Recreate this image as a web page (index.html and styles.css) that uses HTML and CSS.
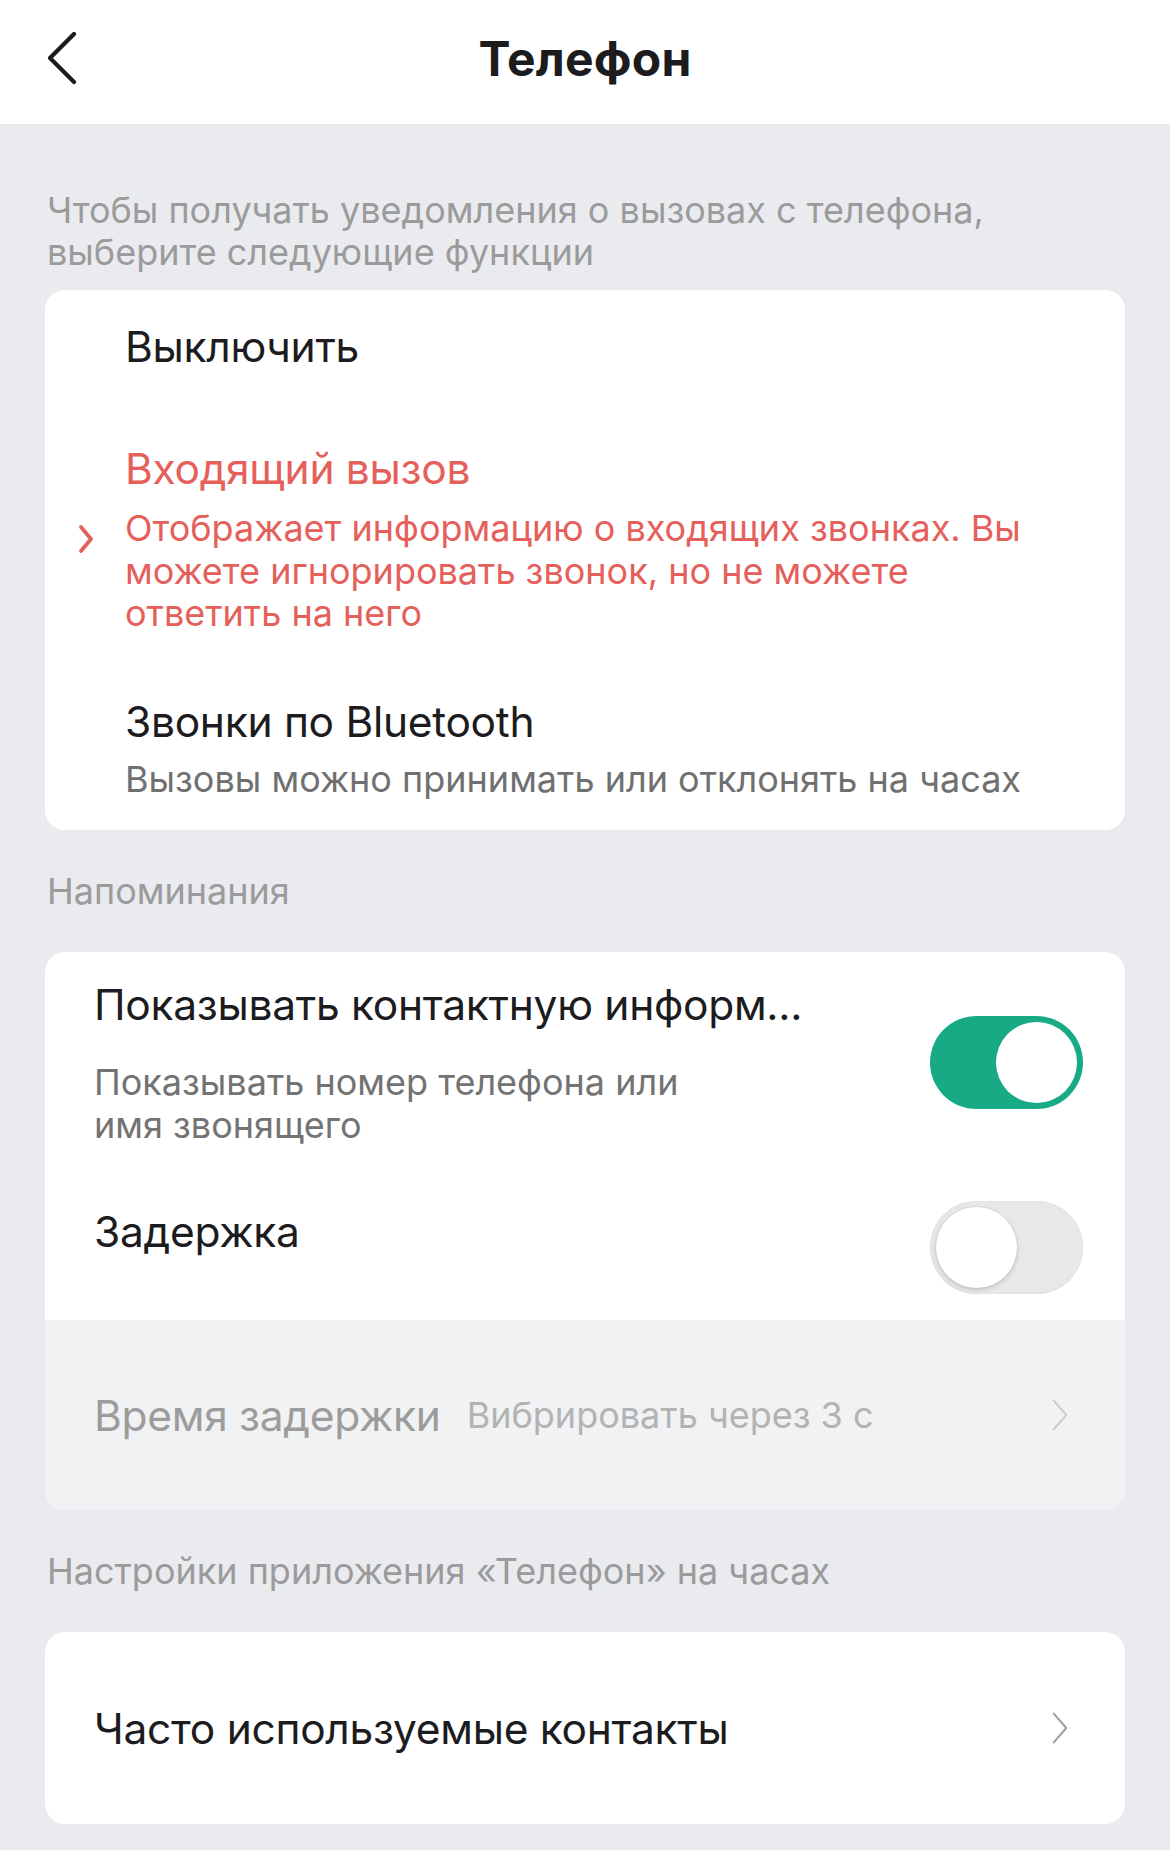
FILE: index.html
```html
<!DOCTYPE html>
<html lang="ru">
<head>
<meta charset="utf-8">
<title>Телефон</title>
<link rel="stylesheet" href="styles.css">
</head>
<body>
<header class="topbar">
  <button class="back" type="button" aria-label="Назад">
    <svg width="30" height="54" viewBox="0 0 30 54" fill="none">
      <polyline points="26,2 2,26 26,50" stroke="#1c1c1e" stroke-width="4.2" stroke-linecap="round" stroke-linejoin="round"/>
    </svg>
  </button>
  <h1 class="title">Телефон</h1>
  <span class="spacer"></span>
</header>

<main class="content">
  <p class="note">Чтобы получать уведомления о вызовах с телефона, выберите следующие функции</p>

  <section class="card options">
    <div class="option option-off">
      <span class="mark"></span>
      <div class="option-body">
        <div class="option-title">Выключить</div>
      </div>
    </div>
    <div class="option selected">
      <span class="mark">
        <svg width="16" height="30" viewBox="0 0 16 30" fill="none">
          <polyline points="3,3 13,15 3,27" stroke="#e5605b" stroke-width="3.8" stroke-linecap="round" stroke-linejoin="round"/>
        </svg>
      </span>
      <div class="option-body">
        <div class="option-title">Входящий вызов</div>
        <div class="option-desc">Отображает информацию о входящих звонках. Вы можете игнорировать звонок, но не можете ответить на него</div>
      </div>
    </div>
    <div class="option option-bt">
      <span class="mark"></span>
      <div class="option-body">
        <div class="option-title">Звонки по Bluetooth</div>
        <div class="option-desc">Вызовы можно принимать или отклонять на часах</div>
      </div>
    </div>
  </section>

  <h2 class="group-label">Напоминания</h2>

  <section class="card">
    <div class="row row-contact">
      <div class="row-text">
        <div class="row-title">Показывать контактную информ...</div>
        <div class="row-sub">Показывать номер телефона или имя звонящего</div>
      </div>
      <span class="switch on"><span class="knob"></span></span>
    </div>
    <div class="row row-delay">
      <div class="row-text">
        <div class="row-title">Задержка</div>
      </div>
      <span class="switch"><span class="knob"></span></span>
    </div>
    <div class="row row-link disabled">
      <span class="link-title">Время задержки</span>
      <span class="link-value">Вибрировать через 3 с</span>
      <svg class="chev" width="20" height="36" viewBox="0 0 20 36" fill="none">
        <polyline points="3,2 17,18 3,34" stroke="currentColor" stroke-width="2.2" stroke-linecap="round" stroke-linejoin="round"/>
      </svg>
    </div>
  </section>

  <h2 class="group-label">Настройки приложения «Телефон» на часах</h2>

  <section class="card">
    <div class="row row-link">
      <span class="link-title">Часто используемые контакты</span>
      <svg class="chev" width="20" height="36" viewBox="0 0 20 36" fill="none">
        <polyline points="3,2 17,18 3,34" stroke="currentColor" stroke-width="2.2" stroke-linecap="round" stroke-linejoin="round"/>
      </svg>
    </div>
  </section>
</main>
</body>
</html>
```

FILE: styles.css
```css
* {
  box-sizing: border-box;
}

html, body {
  margin: 0;
  padding: 0;
}

body {
  background: #eaebef;
  font-family: "Inter", "Roboto", "Noto Sans", sans-serif;
  color: #1c1c1e;
  min-height: 1850px;
}

/* top navigation bar */
.topbar {
  height: 124px;
  background: #ffffff;
  display: grid;
  grid-template-columns: 1fr auto 1fr;
  align-items: center;
}

.back {
  justify-self: start;
  margin-left: 48px;
  margin-top: -6px;
  padding: 0;
  border: 0;
  background: none;
  display: flex;
}

.title {
  margin: 0;
  font-size: 48px;
  font-weight: 700;
  letter-spacing: 0.2px;
  color: #1c1c1e;
  margin-top: -8px;
}

/* page body */
.content {
  padding: 0 45px 28px;
}

.note {
  margin: 0;
  padding: 65px 2px 0;
  font-size: 36px;
  line-height: 42px;
  color: #9b9b9b;
  max-width: 1040px;
}

.group-label {
  margin: 0;
  padding: 40px 2px 40px;
  font-size: 36px;
  line-height: 42px;
  font-weight: 400;
  color: #9b9b9b;
}

.card {
  background: #ffffff;
  border-radius: 20px;
  overflow: hidden;
}

.options {
  margin-top: 17px;
}

/* single-choice list */
.option {
  display: flex;
  align-items: center;
}

.option-off {
  padding: 31px 0 33px;
}

.option.selected {
  padding: 37px 0 28px;
}

.option-bt {
  padding: 33px 0 30px;
}

.mark {
  width: 80px;
  flex: none;
  display: flex;
  justify-content: flex-start;
  padding-left: 33px;
}

.option-body {
  flex: 1;
  padding-right: 80px;
}

.option-title {
  font-size: 42.5px;
  line-height: 52px;
  letter-spacing: -0.3px;
  color: #1c1c1e;
}

.option-desc {
  margin-top: 10px;
  font-size: 36px;
  line-height: 42.5px;
  color: #707070;
}

.option.selected .option-desc {
  margin-top: 12px;
}

.option.selected .option-title,
.option.selected .option-desc {
  color: #e5605b;
}

/* setting rows */
.row {
  display: flex;
  align-items: center;
  padding-left: 49px;
  padding-right: 42px;
}

.row-text {
  flex: 1;
  min-width: 0;
}

.row-title {
  font-size: 42.5px;
  line-height: 52px;
  letter-spacing: -0.3px;
  color: #1c1c1e;
  white-space: nowrap;
}

.row-sub {
  margin-top: 30px;
  max-width: 610px;
  font-size: 36px;
  line-height: 42.5px;
  color: #737373;
}

.row-contact {
  padding-top: 27px;
  padding-bottom: 32px;
}

.row-delay {
  align-items: flex-start;
  padding-top: 23px;
  padding-bottom: 26px;
}

.row-delay .row-title {
  margin-top: 5px;
}

/* toggle switch */
.switch {
  flex: none;
  width: 153px;
  height: 93px;
  border-radius: 47px;
  background: #e8e8eb;
  position: relative;
  box-shadow: inset 0 0 0 1px #e2e2e5;
}

.switch .knob {
  position: absolute;
  top: 6px;
  left: 6px;
  width: 81px;
  height: 81px;
  border-radius: 50%;
  background: #ffffff;
  box-shadow: 0 2px 5px rgba(0, 0, 0, 0.16), 0 0 0 1px rgba(0, 0, 0, 0.04);
}

.switch.on {
  background: #17aa85;
  box-shadow: none;
}

.switch.on .knob {
  left: 66px;
  box-shadow: none;
}

/* navigation rows */
.row-link {
  height: 192px;
  padding-right: 56px;
}

.link-title {
  font-size: 42.5px;
  letter-spacing: -0.3px;
  color: #1c1c1e;
}

.link-value {
  margin-left: 26px;
  font-size: 36px;
  color: #b3b3b3;
}

.chev {
  margin-left: auto;
  flex: none;
  color: #9e9e9e;
  width: 18px;
  height: 34px;
}

.row-link.disabled {
  height: 190px;
  background: #f1f2f4;
}

.row-link.disabled .link-title {
  color: #9c9c9c;
}

.row-link.disabled .chev {
  color: #cbcbcb;
}
```
